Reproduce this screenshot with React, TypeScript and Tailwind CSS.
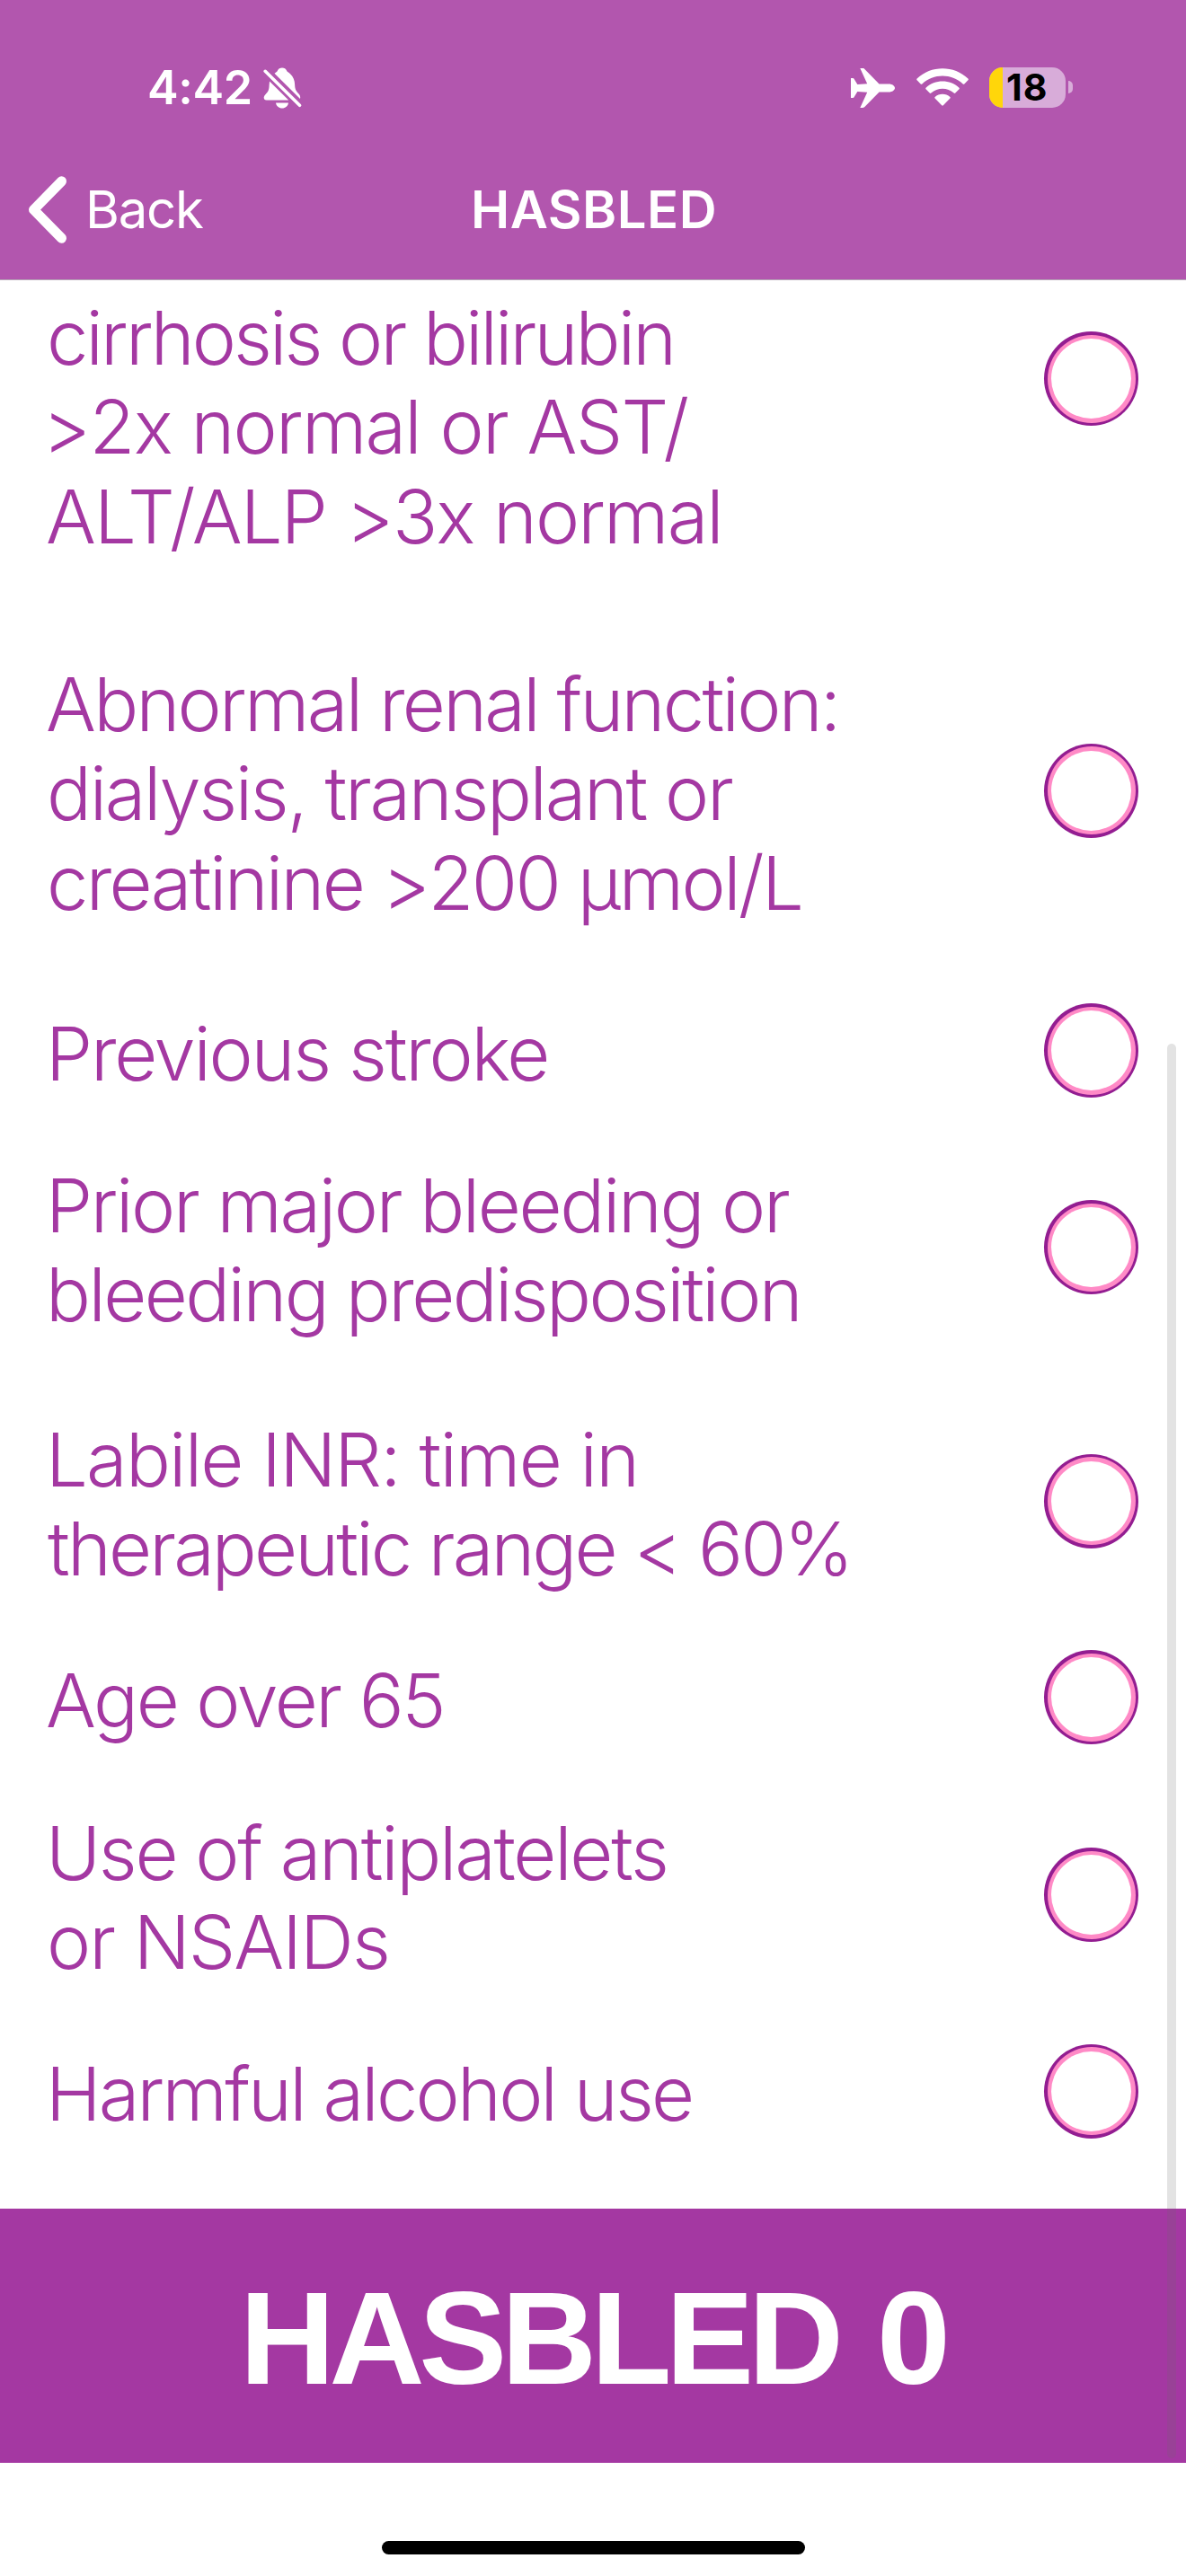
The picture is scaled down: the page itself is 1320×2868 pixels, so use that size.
type Line = { text: string; fit: string };
type Item = { lines: Line[]; gap: string };

const items: Item[] = [
  {
    gap: "mt-[103.9px]",
    lines: [
      { text: "Abnormal renal function:", fit: "tracking-[-2.7px] -ml-[1px]" },
      { text: "dialysis, transplant or", fit: "tracking-[-2.3px]" },
      { text: "creatinine >200 µmol/L", fit: "tracking-[-2.64px]" },
    ],
  },
  { gap: "mt-[83.7px]", lines: [{ text: "Previous stroke", fit: "tracking-[-2.2px] -ml-[1px]" }] },
  {
    gap: "mt-[62.9px]",
    lines: [
      { text: "Prior major bleeding or", fit: "tracking-[-2.35px] -ml-[1px]" },
      { text: "bleeding predisposition", fit: "tracking-[-2.58px] -ml-[1px]" },
    ],
  },
  {
    gap: "mt-[76.7px]",
    lines: [
      { text: "Labile INR: time in", fit: "tracking-[-1.78px] -ml-[1px]" },
      { text: "therapeutic range < 60%", fit: "tracking-[-2.86px] pl-[1px]" },
    ],
  },
  { gap: "mt-[62.4px]", lines: [{ text: "Age over 65", fit: "tracking-[-2.4px] -ml-[1px]" }] },
  {
    gap: "mt-[63.9px]",
    lines: [
      { text: "Use of antiplatelets", fit: "tracking-[-2.25px] -ml-[1px]" },
      { text: "or NSAIDs", fit: "tracking-[-1.91px]" },
    ],
  },
  { gap: "mt-[62.4px]", lines: [{ text: "Harmful alcohol use", fit: "tracking-[-2.74px] -ml-[1px]" }] },
];

function Radio() {
  return (
    <button className="flex h-[105px] w-[105px] shrink-0 rounded-full bg-[#931d91] p-[3.5px]">
      <span className="flex flex-1 self-stretch rounded-full bg-[#ff8ac6] p-[4.5px]">
        <span className="flex-1 rounded-full bg-white" />
      </span>
    </button>
  );
}

function Label({ lines }: { lines: Line[] }) {
  return (
    <div className="flex flex-col">
      {lines.map((l) => (
        <span key={l.text} className={`h-[99.4px] leading-[99.4px] whitespace-pre ${l.fit}`}>
          {l.text}
        </span>
      ))}
    </div>
  );
}

function BellOff() {
  return (
    <svg className="mt-[1px] ml-[12px] h-[46px] w-[43px]" viewBox="0 0 43 46" fill="white">
      <path d="M12.5 6.8C14 5.5 15.3 5 15.7 4C16.7 1.6 18.6 .5 21 .5S25.3 1.6 26.3 4C26.7 5 28 5.300 30 7.200C33.500 10.500 35 14.500 35.100 19C35.200 25 37 26.800 39.500 29.600C41 31.300 41.500 33 41 35Z" />
      <path d="M7 15.500L28.200 36.500H3.500C.3 36.500 -.2 32.800 2.200 30.400C5.200 27.400 6.500 25.500 6.600 20Z" />
      <path d="M14 39.500H28C27.500 43 24.700 45.500 21 45.500S14.500 43 14 39.500Z" />
      <path d="M2.200 4.300L40.500 42.300" stroke="white" strokeWidth="3.600" strokeLinecap="round" />
    </svg>
  );
}

function Plane() {
  return (
    <svg className="mt-[1px] h-[44px] w-[49px]" viewBox="0 0 49 44" fill="white">
      <path d="M10.300 0H13.300C14.300 0 15 .5 15.600 1.200L31.500 17.500H42C46.500 17.500 49 19.900 49 22S46.500 26.500 42 26.500H31.500L15.600 42.800C15 43.500 14.300 44 13.300 44H10.300L18.200 26.800L7.300 26L3.500 32.200C3.200 32.700 2.900 33 2.300 33H0V11H2.300C2.900 11 3.200 11.300 3.500 11.800L7.300 18L18.200 17.200Z" />
    </svg>
  );
}

function Wifi() {
  return (
    <svg className="ml-[24px] h-[42px] w-[58px]" viewBox="0 0 58 42" fill="white">
      <path d="M.6 11.600C16 -3.600 42 -3.600 57.400 11.600C57.900 12.100 57.900 12.700 57.400 13.200L53.300 17.400C52.800 17.900 52.200 17.900 51.700 17.400C39 5.600 19 5.600 6.300 17.400C5.800 17.900 5.200 17.900 4.700 17.400L.6 13.200C.1 12.700 .1 12.100 .6 11.600Z" />
      <path d="M10.500 21.700C20.500 12 37.500 12 47.500 21.700C48 22.200 48 22.800 47.500 23.300L43.300 27.600C42.800 28.100 42.200 28.100 41.700 27.600C34.500 21 23.500 21 16.300 27.600C15.800 28.100 15.200 28.100 14.700 27.600L10.500 23.300C10 22.800 10 22.200 10.500 21.700Z" />
      <path d="M20.600 32C25.200 27.700 32.800 27.700 37.400 32C37.900 32.500 37.900 33.100 37.400 33.600L29.800 41.300C29.300 41.800 28.700 41.800 28.200 41.300L20.600 33.600C20.100 33.100 20.100 32.500 20.600 32Z" />
    </svg>
  );
}

function Battery() {
  return (
    <div className="ml-[23px] flex items-center">
      <div className="flex h-[45px] w-[85px] items-center rounded-[15px] bg-[#d8acd9]">
        <div className="h-[45px] w-[15px] shrink-0 rounded-l-[15px] bg-[#ffd60a]" />
        <span className="ml-[4px] text-[41px] leading-[45px] font-bold tracking-[1px] text-black">18</span>
      </div>
      <div className="ml-[3px] h-[14px] w-[5px] rounded-r-full bg-[#d8acd9]" />
    </div>
  );
}

export default function App() {
  return (
    <div className="relative flex h-[2868px] w-[1320px] flex-col overflow-hidden bg-white font-['Inter',sans-serif]">
      <header className="flex h-[312px] shrink-0 flex-col border-b border-[#b5a8b5] bg-[#b256ae] text-white">
        <div className="flex h-[156px] items-center justify-between pt-[38px] pr-[126px] pl-[164px]">
          <div className="flex items-center pt-[1px]">
            <span className="text-[52px] leading-[60px] font-semibold tracking-[-0.4px]">4:42</span>
            <BellOff />
          </div>
          <div className="flex items-center">
            <Plane />
            <Wifi />
            <Battery />
          </div>
        </div>
        <nav className="grid h-[155px] grid-cols-[1fr_auto_1fr] items-center pb-[1px]">
          <button className="flex items-center pl-[31px]">
            <svg className="h-[75px] w-[44px]" viewBox="0 0 44 75" fill="none">
              <path
                d="M37.500 5.800L6.500 37.500L37.500 69.200"
                stroke="white"
                strokeWidth="11"
                strokeLinecap="round"
                strokeLinejoin="round"
              />
            </svg>
            <span className="ml-[20px] text-[58px] leading-[70px] tracking-[-1.2px]">Back</span>
          </button>
          <h1 className="pl-[2px] text-[58px] leading-[70px] font-semibold tracking-[0.5px]">HASBLED</h1>
        </nav>
      </header>

      <main className="flex h-[2147px] shrink-0 flex-col pr-[53px] pl-[52px] text-[83px] font-light text-[#a438a2]">
        <section className="mt-[15px] flex h-[297px] items-start justify-between">
          <Label
            lines={[
              { text: "cirrhosis or bilirubin", fit: "tracking-[-2.85px]" },
              { text: ">2x normal or AST/", fit: "tracking-[-1.77px] -ml-[5px]" },
              { text: "ALT/ALP >3x normal", fit: "tracking-[-1.87px] -ml-[1px]" },
            ]}
          />
          <div className="mt-[42px]">
            <Radio />
          </div>
        </section>
        {items.map((item) => (
          <section key={item.lines[0].text} className={`flex items-center justify-between ${item.gap}`}>
            <div className="pt-[7px]">
              <Label lines={item.lines} />
            </div>
            <Radio />
          </section>
        ))}
      </main>

      <footer className="flex h-[283px] shrink-0 items-center justify-center bg-[#a438a2] pt-[5px]">
        <span className="pr-[2px] font-['Liberation_Sans',sans-serif] text-[147px] leading-[170px] font-bold tracking-[-6.4px] text-white [word-spacing:9px]">
          HASBLED 0
        </span>
      </footer>

      <div className="flex flex-1 items-start justify-center pt-[87px]">
        <div className="h-[15px] w-[471px] rounded-full bg-black" />
      </div>

      <div className="absolute top-[1162px] right-[11px] h-[1575px] w-[10px] rounded-full bg-[#696969]/[0.187]" />
    </div>
  );
}
